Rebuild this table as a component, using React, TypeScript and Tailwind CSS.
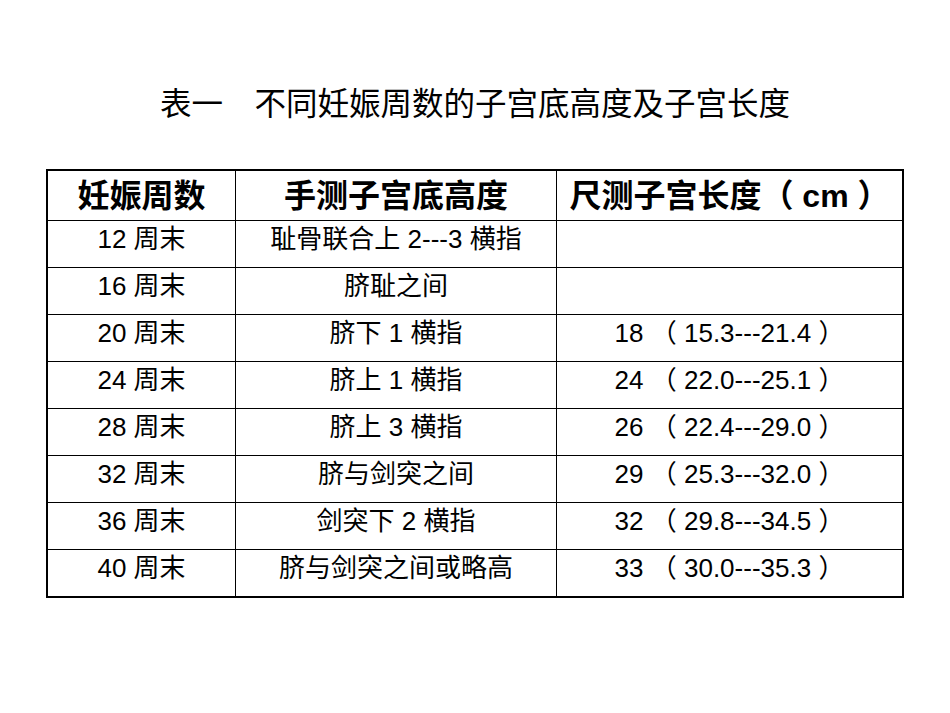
const rows: [string, string, string][] = [
  ["12 周末", "耻骨联合上 2---3 横指", ""],
  ["16 周末", "脐耻之间", ""],
  ["20 周末", "脐下 1 横指", "18 （ 15.3---21.4 ）"],
  ["24 周末", "脐上 1 横指", "24 （ 22.0---25.1 ）"],
  ["28 周末", "脐上 3 横指", "26 （ 22.4---29.0 ）"],
  ["32 周末", "脐与剑突之间", "29 （ 25.3---32.0 ）"],
  ["36 周末", "剑突下 2 横指", "32 （ 29.8---34.5 ）"],
  ["40 周末", "脐与剑突之间或略高", "33 （ 30.0---35.3 ）"],
];

const font = { fontFamily: '"Liberation Sans", "Noto Sans CJK SC", sans-serif' };

export default function App() {
  return (
    <div className="w-[950px] h-[713px] bg-white text-black" style={font}>
      <h1
        className="pt-[82px] text-center text-[31.5px] leading-[45px] font-normal whitespace-pre"
        style={{ fontFamily: '"Liberation Serif", "Noto Sans CJK SC", serif' }}
      >
        表一　不同妊娠周数的子宫底高度及子宫长度
      </h1>
      <div className="ml-[46px] mt-[42px] w-[858px] border-2 border-black">
        <div className="flex h-[50px] border-b border-black text-[32px] font-bold">
          <div className="flex w-[188px] items-center justify-center border-r border-black">妊娠周数</div>
          <div className="flex w-[321px] items-center justify-center border-r border-black">手测子宫底高度</div>
          <div className="flex flex-1 items-center justify-center whitespace-pre">尺测子宫长度（ cm ）</div>
        </div>
        {rows.map((r, i) => (
          <div
            key={r[0]}
            className={`flex text-[26px] leading-[32px] ${i < rows.length - 1 ? "h-[47px] border-b border-black" : "h-[46px]"}`}
          >
            <div className="w-[188px] border-r border-black pt-[2px] text-center">{r[0]}</div>
            <div className="w-[321px] border-r border-black pt-[2px] text-center">{r[1]}</div>
            <div className="flex-1 pt-[2px] text-center whitespace-pre">{r[2]}</div>
          </div>
        ))}
      </div>
    </div>
  );
}
